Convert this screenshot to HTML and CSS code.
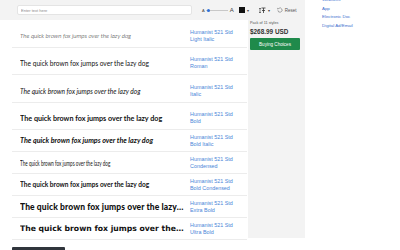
FILE: index.html
```html
<!DOCTYPE html>
<html lang="en">
<head>
    <meta charset="UTF-8">
    <meta name="viewport" content="width=device-width, initial-scale=1.0">
    <title>Humanist 521 Std</title>
    <link rel="stylesheet" href="styles.css">
</head>
<body>
    <div class="page">
        <div class="main">
            <!-- Tester toolbar -->
            <div class="toolbar">
                <input type="text" class="tester-input" placeholder="Enter text here">
                <div class="size-control">
                    <span class="a-small">A</span>
                    <span class="track"><span class="knob"></span></span>
                    <span class="a-big">A</span>
                </div>
                <div class="tool">
                    <span class="swatch"></span>
                    <span class="caret">&#9662;</span>
                </div>
                <div class="tool lh-tool">
                    <svg width="7" height="7" viewBox="0 0 14 14">
                        <path d="M2 2v10M0.5 4L2 2l1.5 2M0.5 10L2 12l1.5-2" stroke="#333" stroke-width="1.2" fill="none"/>
                        <path d="M5 2h8M9 2v10M6 7h6" stroke="#333" stroke-width="1.6" fill="none"/>
                    </svg>
                    <span class="caret">&#9662;</span>
                </div>
                <div class="reset">
                    <svg width="6" height="6" viewBox="0 0 12 12">
                        <path d="M3 3.2A4.2 4.2 0 1 1 1.8 6.5" stroke="#666" stroke-width="1.1" fill="none"/>
                        <path d="M1 1.5L3.4 3.6 1 4.8z" fill="#666"/>
                    </svg>
                    <span>Reset</span>
                </div>
            </div>

            <div class="content">
                <!-- Style list -->
                <div class="style-list">
                    <div class="row tall">
                        <div class="sample s-light-italic">The quick brown fox jumps over the lazy dog</div>
                        <a class="style-name" href="#">Humanist 521 Std<br>Light Italic</a>
                    </div>
                    <div class="row tall">
                        <div class="sample s-roman">The quick brown fox jumps over the lazy dog</div>
                        <a class="style-name" href="#">Humanist 521 Std<br>Roman</a>
                    </div>
                    <div class="row tall">
                        <div class="sample s-italic">The quick brown fox jumps over the lazy dog</div>
                        <a class="style-name" href="#">Humanist 521 Std<br>Italic</a>
                    </div>
                    <div class="row tall">
                        <div class="sample s-bold">The quick brown fox jumps over the lazy dog</div>
                        <a class="style-name" href="#">Humanist 521 Std<br>Bold</a>
                    </div>
                    <div class="row">
                        <div class="sample s-bold-italic">The quick brown fox jumps over the lazy dog</div>
                        <a class="style-name" href="#">Humanist 521 Std<br>Bold Italic</a>
                    </div>
                    <div class="row">
                        <div class="sample s-condensed"><span class="squeeze">The quick brown fox jumps over the lazy dog</span></div>
                        <a class="style-name" href="#">Humanist 521 Std<br>Condensed</a>
                    </div>
                    <div class="row">
                        <div class="sample s-bold-condensed"><span class="squeeze">The quick brown fox jumps over the lazy dog</span></div>
                        <a class="style-name" href="#">Humanist 521 Std<br>Bold Condensed</a>
                    </div>
                    <div class="row">
                        <div class="sample s-extra-bold">The quick brown fox jumps over the lazy dog</div>
                        <a class="style-name" href="#">Humanist 521 Std<br>Extra Bold</a>
                    </div>
                    <div class="row">
                        <div class="sample s-ultra-bold">The quick brown fox jumps over the lazy dog</div>
                        <a class="style-name" href="#">Humanist 521 Std<br>Ultra Bold</a>
                    </div>
                </div>

                <!-- Purchase panel -->
                <div class="buy-panel">
                    <div class="pack">Pack of 11 styles</div>
                    <div class="price">$268.99 USD</div>
                    <button class="buy-btn">Buying Choices</button>
                </div>
            </div>

            <button class="more-btn"></button>
        </div>

        <!-- License links -->
        <ul class="licenses">
            <li><a href="#">Webfonts</a></li>
            <li><a href="#">App</a></li>
            <li><a href="#">Electronic Doc</a></li>
            <li><a href="#">Digital Ad/Email</a></li>
        </ul>
    </div>
</body>
</html>
```

FILE: styles.css
```css
body {
    margin: 0;
    font-family: "Liberation Sans", Arial, sans-serif;
    color: #333;
    background: #fff;
    overflow: hidden;
}

.page {
    display: flex;
    align-items: flex-start;
}

.main {
    width: 305px;
    flex-shrink: 0;
}

/* toolbar */
.toolbar {
    height: 20px;
    background-color: #f3f3f3;
    display: flex;
    align-items: center;
    padding-left: 17px;
    box-sizing: border-box;
}

.tester-input {
    width: 175px;
    height: 10px;
    box-sizing: border-box;
    border: 1px solid #e4e4e4;
    border-radius: 2px;
    background: #fff;
    padding: 0 3px;
    font-size: 4px;
    font-family: inherit;
    outline: none;
}

.tester-input::placeholder {
    color: #888;
}

.size-control {
    display: flex;
    align-items: center;
    margin-left: 10px;
    color: #444;
}

.a-small {
    font-size: 4px;
}

.a-big {
    font-size: 6px;
    margin-left: 2px;
}

.track {
    position: relative;
    width: 22px;
    height: 1px;
    background-color: #c8c8c8;
    margin-left: 1px;
}

.knob {
    position: absolute;
    left: 1px;
    top: -1px;
    width: 3px;
    height: 3px;
    border-radius: 50%;
    background-color: #2e6fd8;
}

.tool {
    display: flex;
    align-items: center;
    margin-left: 5px;
}

.lh-tool {
    margin-left: 10px;
}

.swatch {
    width: 6px;
    height: 6px;
    background-color: #111;
}

.caret {
    font-size: 4px;
    color: #444;
    margin-left: 2px;
}

.reset {
    display: flex;
    align-items: center;
    margin-left: 7px;
    font-size: 4.5px;
    color: #555;
}

.reset span {
    margin-left: 2px;
}

/* list + panel */
.content {
    display: flex;
}

.style-list {
    width: 235px;
    margin-left: 12px;
    background: #fff;
}

.row {
    height: 22px;
    display: flex;
    align-items: center;
    border-bottom: 1px solid #ececec;
    box-sizing: border-box;
    padding-left: 8px;
}

.row.tall {
    height: 27.5px;
    padding-top: 5px;
}

.sample {
    width: 164px;
    margin-right: 6px;
    white-space: nowrap;
    overflow: hidden;
    text-overflow: ellipsis;
    font-family: Lato, "Open Sans", sans-serif;
    font-size: 6.6px;
    color: #111;
}

.squeeze {
    display: inline-block;
    transform-origin: left center;
}

.s-light-italic {
    font-weight: 300;
    font-style: italic;
    font-size: 6.2px;
}

.s-roman {
    font-size: 6.6px;
}

.s-italic {
    font-style: italic;
    font-size: 6.6px;
}

.s-bold {
    font-weight: 700;
    font-size: 7.2px;
}

.s-bold-italic {
    font-weight: 700;
    font-style: italic;
    font-size: 7.2px;
}

.s-condensed {
    font-size: 7px;
}

.s-condensed .squeeze {
    transform: scaleX(0.66);
}

.s-bold-condensed {
    font-weight: 700;
    font-size: 7.5px;
}

.s-bold-condensed .squeeze {
    transform: scaleX(0.87);
}

.s-extra-bold {
    font-weight: 900;
    font-size: 8.5px;
    letter-spacing: 0.1px;
}

.s-ultra-bold {
    font-family: "DejaVu Sans", sans-serif;
    font-weight: 700;
    font-size: 7.7px;
}

.style-name {
    font-size: 5.4px;
    line-height: 7px;
    color: #4a86d8;
    text-decoration: none;
}

.buy-panel {
    width: 57px;
    height: 218px;
    margin-left: 1px;
    background-color: #f3f3f3;
    padding: 0 5px 0 2px;
    box-sizing: border-box;
}

.pack {
    font-size: 3.8px;
    color: #555;
    padding-top: 1px;
}

.price {
    font-size: 6.4px;
    font-weight: bold;
    color: #333;
    margin-top: 3px;
}

.buy-btn {
    display: block;
    width: 50px;
    height: 12px;
    margin-top: 3px;
    border: none;
    border-radius: 1px;
    background-color: #1f8a4b;
    color: #fff;
    font-family: inherit;
    font-size: 4.6px;
    padding: 0;
}

.more-btn {
    display: block;
    width: 53px;
    height: 10px;
    margin: 7px 0 0 12px;
    border: none;
    border-radius: 1px;
    background-color: #30353c;
}

/* license links */
.licenses {
    list-style: none;
    margin: -4px 0 0 17px;
    padding: 0;
}

.licenses li {
    height: 8.7px;
    font-size: 4.4px;
    line-height: 8.7px;
}

.licenses a {
    color: #3b6fce;
    text-decoration: none;
}
```
